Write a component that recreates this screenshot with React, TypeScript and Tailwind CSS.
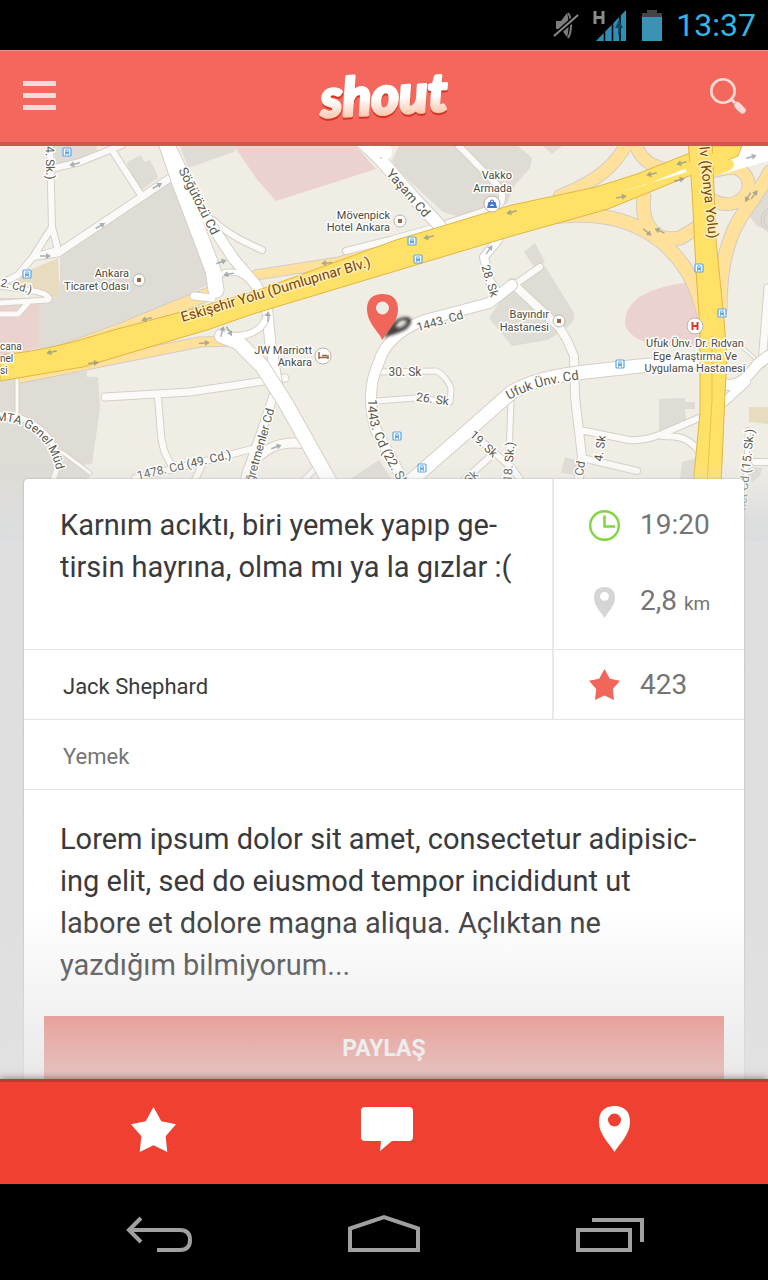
import React from "react";

const LOCAL = "#fbfaf8";
const CASING = "#d5d0c6";

const buildings = [
  "M60 257L170 178L180 200L211 283L120 330L77 345L39 360V297L60 298Z",
  "M0 378L87 371V377L98 377L100 408L92 464L83 465L90 477L60 492L0 540Z",
  "M39 345L39 330L110 325L60 350Z",
  "M52 146H96L100 158L58 168Z",
  "M127 162L141 155L144 162L150 160L156 172L158 178L138 192L132 180Z",
  "M180 146H238L234 152L188 168Z",
  "M399 146H518L532 158L530 168L515 185L507 203L460 217L443 212L398 170L392 160Z",
  "M543 146L552 154L562 146Z",
  "M503 297L545 266L574 313C576 325 560 332 548 340L512 346L489 318Z",
  "M524 252L535 243L545 262L535 268Z",
  "M659 399L685 398V402H695V409H685L687 427L659 432Z",
  "M565 457L579 461L577 475L561 473Z",
  "M682 462L697 458L694 480H680Z",
  "M768 188L755 208L750 217L757 226L768 230Z",
  "M349 480L379 460L392 480Z",
  "M745 466L762 468L760 476L752 482L744 480Z",
];

const pinkAreas = [
  "M234 146H356L376 169L276 201L256 178Z",
  "M0 298H39V348L0 358Z",
  "M685 283C650 287 625 300 625 322C625 335 645 346 670 346H710V300L699 283Z",
];

const tanAreas = ["M30 270L58 258L60 298L20 292L14 284Z", "M749 407H768V424L749 422Z"];

/* [path, width] */
const localRoads: [string, number][] = [
  ["M50 146L52 227L33 257L18 275L0 284", 6],
  ["M52 227L58 250L33 257", 6],
  ["M36 256L58 253L170 178", 7],
  ["M55 168L80 162L122 145", 6],
  ["M112 150L141 195", 6],
  ["M0 286L33 291C46 293 52 298 48 300L0 303", 5],
  ["M0 314H18L28 303", 5],
  ["M213 220C225 232 240 240 262 250", 6],
  ["M346 251L390 240L436 227L496 207C504 202 504 195 498 186L459 146", 6],
  ["M105 397L190 392L285 378", 7],
  ["M158 397L161 435C163 450 166 458 174 468", 6],
  ["M135 478L190 465L252 449", 6],
  ["M203 463L193 484", 6],
  ["M17 380V415", 3],
  ["M0 415C35 415 58 440 58 465L52 484", 5],
  ["M62 452L90 473", 3],
  ["M276 388L262 430L243 484", 8],
  ["M248 470C262 448 280 440 306 444", 9],
  ["M318 466L300 484", 5],
  ["M379 372L436 371C443 373 451 385 451 390L450 402L416 398L376 401", 5],
  ["M469 430L512 468L522 482", 6],
  ["M491 456L460 484", 6],
  ["M511 400L508 484", 5],
  ["M512 283L559 327L567 340L574 356L575 397L582 457L578 484", 8],
  ["M498 296L540 267", 6],
  ["M580 430L629 440C640 441 652 438 662 434L699 418", 6],
  ["M662 436C680 436 688 438 698 450", 6],
  ["M582 458L637 471", 6],
  ["M742 347L757 360", 2],
  ["M768 288L762 364", 7],
  ["M755 462H768", 6],
  ["M748 430L744 520", 4],
];

const mainRoads: [string, number][] = [
  ["M166 142L180 183L213 270L216 290", 15],
  ["M172 150L198 205L233 258L256 285L267 308L270 340L277 384", 10],
  ["M212 286C214 275 224 270 238 273C250 278 254 284 256 290", 5],
  ["M194 296L212 298", 7],
  ["M222 336L238 342L262 366L285 402L332 486", 14],
  ["M232 336C250 336 262 330 266 318", 6],
  ["M360 140L381 160L412 196L440 226", 12],
  ["M498 240L484 257L489 280L500 296", 8],
  ["M512 285L489 303L425 320C395 330 382 350 379 362C368 385 370 410 376 430L406 486", 10],
  ["M405 486L512 392C545 373 590 372 640 366L702 361", 13],
  ["M724 384C740 390 752 370 758 364L768 356", 10],
  ["M724 402L746 382", 8],
];

const ramps: [string, number][] = [
  ["M60 352L120 330L213 292", 12],
  ["M256 275L339 262L400 243", 9],
  ["M20 378L100 362L200 342L234 341", 9],
  ["M628 142C615 165 600 180 560 196", 12],
  ["M634 142C640 158 650 168 672 170", 12],
  ["M644 196C640 225 655 243 680 238L700 226", 13],
  ["M550 217C610 210 640 225 662 242C685 262 702 290 706 330", 13],
  ["M712 200C735 212 752 195 748 180C742 165 730 166 710 172", 12],
  ["M770 172C755 200 738 215 730 240C724 256 720 280 720 310", 13],
];

const HIGHWAY =
  "M0 355C50 350 80 340 110 331L207 305L256 291L396 240L446 225L512 205L596 187L637 174L690 153L700 146H742L738 156L608 209L512 236L256 313L207 330L133 352L83 367L0 381Z";
const KONYA = "M688 140L692 190L696 270L700 330V413L693 486H721L725 393L727 360L724 320L716 240L712 140Z";

const arrows: [number, number, number][] = [
  [75, 164, 165], [157, 186, -30], [100, 226, -30], [45, 256, 0], [221, 262, -20], [229, 274, 170],
  [147, 319, 165], [52, 352, 165], [93, 363, -5], [204, 343, -5], [222, 332, -75], [229, 331, 60],
  [268, 317, -90], [327, 263, 175], [429, 237, 165], [512, 212, 165], [489, 250, -55], [652, 174, 165],
  [682, 163, 165], [679, 180, -15], [621, 197, -10], [647, 232, 40], [660, 231, 205], [751, 157, -15],
  [748, 197, 120], [754, 195, -55], [276, 447, -20],
];

const buses: [number, number][] = [
  [67, 152], [27, 274], [412, 241], [418, 259], [397, 436], [422, 468], [699, 268], [722, 313], [620, 364],
];

function Label({
  x, y, r = 0, size = 12, anchor = "middle", fill = "#4d4a40", halo = "#ffffff", children,
}: {
  x: number; y: number; r?: number; size?: number; anchor?: "start" | "middle" | "end";
  fill?: string; halo?: string; children: React.ReactNode;
}) {
  return (
    <text
      transform={`translate(${x} ${y}) rotate(${r})`}
      fontSize={size}
      textAnchor={anchor}
      fill={fill}
      stroke={halo}
      strokeWidth="3"
      strokeLinejoin="round"
      paintOrder="stroke"
    >
      {children}
    </text>
  );
}

function PathLabel({ id, d, size = 12, children }: { id: string; d: string; size?: number; children: string }) {
  return (
    <>
      <path id={id} d={d} fill="none" />
      <text fontSize={size} fill="#5c584b" stroke="#ffffff" strokeWidth="3" strokeLinejoin="round" paintOrder="stroke">
        <textPath href={`#${id}`}>{children}</textPath>
      </text>
    </>
  );
}

function Roads({ roads, color, casing }: { roads: [string, number][]; color: string; casing: string }) {
  return (
    <g fill="none" strokeLinecap="round" strokeLinejoin="round">
      {roads.map(([d, w]) => (
        <path key={`c${d}`} d={d} stroke={casing} strokeWidth={w + 2} />
      ))}
      {roads.map(([d, w]) => (
        <path key={d} d={d} stroke={color} strokeWidth={w} />
      ))}
    </g>
  );
}

function CityMap() {
  return (
    <svg
      viewBox="0 146 768 396"
      preserveAspectRatio="xMidYMin slice"
      className="block h-[396px] w-full bg-[#f0ede5]"
      fontFamily="Roboto, sans-serif"
      role="img"
      aria-label="Ankara"
    >
      <defs>
        <linearGradient id="mapFade" x1="0" y1="0" x2="0" y2="1">
          <stop offset="0" stopColor="#dcddde" stopOpacity="0" />
          <stop offset="0.75" stopColor="#dcddde" stopOpacity="0.95" />
          <stop offset="1" stopColor="#dcddde" />
        </linearGradient>
        <filter id="pinShadow" x="-30%" y="-30%" width="160%" height="160%">
          <feGaussianBlur stdDeviation="1.6" />
        </filter>
      </defs>
      <rect x="0" y="146" width="768" height="396" fill="#f0ede5" />
      {pinkAreas.map((d) => <path key={d} d={d} fill="#ebd2cf" />)}
      {tanAreas.map((d) => <path key={d} d={d} fill="#e8dcc0" />)}
      {buildings.map((d) => <path key={d} d={d} fill="#dfdbd5" />)}
      <g fill="none" stroke="#cfcac4" strokeWidth="1">
        <circle cx="774" cy="220" r="13" />
        <circle cx="774" cy="220" r="10" />
      </g>
      <Roads roads={ramps} color="#ffe19c" casing="#d2cdc4" />
      <Roads roads={localRoads} color={LOCAL} casing={CASING} />
      <Roads roads={mainRoads.slice(0, 4)} color="#ffffff" casing={CASING} />
      <Roads roads={mainRoads.slice(4)} color="#ffffff" casing={CASING} />
      <circle cx="383" cy="152" r="9" fill="#ffffff" />
      <circle cx="381" cy="158" r="1" fill="#d5d0c6" />
      <path d="M700 170L742 146H768V161L722 174Z" fill="#ffffff" />
      <path d={HIGHWAY} fill="#ffe168" stroke="#e2b640" strokeWidth="1" />
      <path d="M604 197L645 185L692 166L694 170L650 183Z" fill="#ffffff" />
      <path d="M692 171L725 160C735 157 738 168 728 171L700 181Z" fill="#ffe168" />
      <path d={KONYA} fill="#ffe168" stroke="#e2b640" strokeWidth="1" />
      <path d="M712 335V400L707 484" fill="none" stroke="#ecc14e" strokeWidth="1" />
      <path d="M684 164L716 152L718 164L688 176Z" fill="#ffe168" />

      {arrows.map(([x, y, r]) => (
        <g key={`${x}-${y}`} transform={`translate(${x} ${y}) rotate(${r})`} opacity="0.65">
          <path d="M-5 0H2" stroke="#7d8a90" strokeWidth="1.5" />
          <path d="M1 -3L6 0L1 3Z" fill="#7d8a90" />
        </g>
      ))}
      {buses.map(([x, y]) => (
        <g key={`${x}-${y}`} transform={`translate(${x} ${y})`}>
          <rect x="-4" y="-4" width="8" height="8" rx="1" fill="#ffffff" stroke="#5aa5e8" strokeWidth="1.2" />
          <rect x="-2" y="-2.500" width="4" height="4.500" rx="1" fill="#5aa5e8" />
          <path d="M-1.500 -1H1.500" stroke="#ffffff" />
          <path d="M-2 2.700H-1M1 2.700H2" stroke="#5aa5e8" />
        </g>
      ))}

      <Label x={46} y={163} r={88} fill="#5c584b">4. Sk.)</Label>
      <Label x={0} y={286} r={14} size={11} anchor="start" fill="#5c584b">2. Cd.)</Label>
      <Label x={195} y={203} r={63} size={13} fill="#5c584b">Söğütözü Cd</Label>
      <Label x={405} y={196} r={49} size={13} fill="#5c584b">Yaşam Cd</Label>
      <Label x={277} y={294} r={-16.500} size={14} fill="#7a4408" halo="#fff0b8">Eskişehir Yolu (Dumlupınar Blv.)</Label>
      <Label x={704} y={193} r={84} size={14} fill="#7a4408" halo="#fff0b8">lv (Konya Yolu)</Label>
      <Label x={486} y={282} r={73} fill="#5c584b">28. Sk</Label>
      <Label x={441} y={325} r={-16} fill="#5c584b">1443. Cd</Label>
      <Label x={405} y={376} fill="#5c584b">30. Sk</Label>
      <Label x={432} y={403} r={8} fill="#5c584b">26. Sk</Label>
      <Label x={481} y={447} r={43} fill="#5c584b">19. Sk</Label>
      <Label x={513} y={462} r={-86} fill="#5c584b">18. Sk.)</Label>
      <Label x={474} y={480} r={-42} fill="#5c584b">Sk</Label>
      <Label x={604} y={449} r={-82} fill="#5c584b">4. Sk</Label>
      <Label x={584} y={469} r={-80} fill="#5c584b">Cd</Label>
      <Label x={185} y={469} r={-13} fill="#5c584b">1478. Cd (49. Cd.)</Label>
      <Label x={264} y={446} r={-74} fill="#5c584b">ğretmenler Cd</Label>
      <Label x={750} y={470} r={-84} fill="#5c584b">net Cd (15. Sk.)</Label>
      <PathLabel id="roadMta" d="M-4 421C24 420 48 436 56 468L58 480">MTA Genel Müd</PathLabel>
      <PathLabel id="road1443" d="M368 399C366 430 382 452 408 500" size={13}>1443. Cd (22. Sk.)</PathLabel>
      <PathLabel id="roadUfuk" d="M509 400C530 388 550 383 590 378" size={13}>Ufuk Ünv. Cd</PathLabel>

      <g>
        <Label x={129} y={277} size={11} anchor="end">Ankara</Label>
        <Label x={129} y={290} size={11} anchor="end">Ticaret Odası</Label>
        <Label x={390} y={219} size={11} anchor="end">Mövenpick</Label>
        <Label x={390} y={231} size={11} anchor="end">Hotel Ankara</Label>
        <Label x={512} y={179} size={11} anchor="end">Vakko</Label>
        <Label x={512} y={192} size={11} anchor="end">Armada</Label>
        <Label x={312} y={354} size={11} anchor="end">JW Marriott</Label>
        <Label x={312} y={366} size={11} anchor="end">Ankara</Label>
        <Label x={549} y={318} size={11} anchor="end">Bayındır</Label>
        <Label x={549} y={331} size={11} anchor="end">Hastanesi</Label>
        <Label x={695} y={347} size={11}>Ufuk Ünv. Dr. Rıdvan</Label>
        <Label x={695} y={360} size={11}>Ege Araştırma Ve</Label>
        <Label x={695} y={372} size={11}>Uygulama Hastanesi</Label>
        <Label x={0} y={350} size={10} anchor="start">cana</Label>
        <Label x={0} y={362} size={10} anchor="start">nel</Label>
        <Label x={0} y={374} size={10} anchor="start">si</Label>
      </g>
      <g fill="#ffffff" stroke="#b9b4ac">
        <circle cx="139" cy="280" r="6" />
        <circle cx="400" cy="221" r="6" />
        <circle cx="559" cy="321" r="6" />
        <circle cx="492" cy="204" r="8" />
        <circle cx="323" cy="356" r="8" />
        <circle cx="695" cy="326" r="8" />
      </g>
      <path d="M137 278h4v4h-4zM398 219h4v4h-4zM557 319h4v4h-4z" fill="#936846" />
      <path d="M488.500 202h7l1.500 6h-10z" fill="#3f78cc" />
      <path d="M490.500 202v-.5a1.500 1.500 0 0 1 3 0V202" fill="none" stroke="#3f78cc" strokeWidth="1.200" />
      <path d="M490.500 204.500h3v1.500h-3z" fill="#ffffff" />
      <path d="M319 352v7M319 357.500h9M328 355v4M322 355.500h5" fill="none" stroke="#936846" strokeWidth="1.500" />
      <path d="M692.500 322v8M697.500 322v8M692.500 326h5" fill="none" stroke="#d8382e" strokeWidth="2" />

      <g filter="url(#pinShadow)" opacity="0.8">
        <path d="M384 338C390 322 398 316 408 317C414 319 411 326 405 330C398 334 390 335 384 338ZM396 327C400 329 406 325 407 321C402 319 397 322 396 327Z" fill="#1c1917" fillRule="evenodd" />
      </g>
      <path
        d="M382.500 340C379 332 367 323 367 309C367 299 373 294 382.500 294S398 299 398 309C398 323 386 332 382.500 340ZM382.500 301.500a6.500 6.500 0 1 0 0 13a6.500 6.500 0 1 0 0-13Z"
        fill="#f1665b"
        fillRule="evenodd"
      />
      <rect x="0" y="462" width="768" height="80" fill="url(#mapFade)" />
    </svg>
  );
}

function StarIcon({ className }: { className: string }) {
  return (
    <svg viewBox="0 0 45 45" className={className} aria-hidden="true">
      <path d="M22.500 0L30.300 14.300L45 17.200L34.600 29.200L36.300 45L22.500 38.300L8.700 45L10.400 29.200L0 17.200L14.700 14.300Z" fill="currentColor" />
    </svg>
  );
}

function PinIcon({ className }: { className: string }) {
  return (
    <svg viewBox="0 0 31 46" className={className} aria-hidden="true">
      <path
        d="M15.500 46C11 38 0 29 0 16C0 5 6 0 15.500 0S31 5 31 16C31 29 20 38 15.500 46ZM15.500 7.500a6.500 6.500 0 1 0 0 13a6.500 6.500 0 1 0 0-13Z"
        fill="currentColor"
        fillRule="evenodd"
      />
    </svg>
  );
}

function StatusBar() {
  return (
    <div className="flex h-[50px] shrink-0 items-center justify-end bg-black pr-3">
      <svg viewBox="0 0 26 30" className="mr-[14px] h-[30px] w-[26px]" aria-hidden="true">
        <path d="M3 11H8L14 3C16 8 16 22 14 27L8 19H3Z" fill="#7d7d7d" />
        <path d="M15 3C19 8 19 22 15 28" fill="none" stroke="#7d7d7d" strokeWidth="2" />
        <path d="M0 27L24 6" stroke="#000000" strokeWidth="5" />
        <path d="M1 26L25 5" stroke="#8a8a8a" strokeWidth="2" />
      </svg>
      <svg viewBox="0 0 34 32" className="mr-[15px] h-8 w-[34px]" aria-hidden="true">
        <path d="M2 2V15M10 2V15M2 8.500H10" stroke="#8a8a8a" strokeWidth="3" fill="none" />
        <path d="M3 32L33 1V32Z" fill="#2d8fb8" />
        <path d="M11.500 18V32M19.500 12V32M27 5V32" stroke="#000000" strokeWidth="1.500" />
        <path d="M26 11L30 19H22Z" fill="#124860" />
        <path d="M26 18V26" stroke="#124860" strokeWidth="1.500" />
      </svg>
      <svg viewBox="0 0 20 32" className="mr-[14px] h-8 w-5" aria-hidden="true">
        <path d="M0 4H5V1H15V4H20V8H0Z" fill="#444444" />
        <path d="M0 8H20V32H0Z" fill="#3a93b5" />
      </svg>
      <span className="text-[32px] leading-8 text-[#33b5e5]">13:37</span>
    </div>
  );
}

function Logo() {
  return (
    <svg viewBox="0 0 140 60" className="h-[60px] w-[140px]" role="img" aria-label="shout">
      <defs>
        <linearGradient id="logoFill" gradientUnits="userSpaceOnUse" x1="0" y1="18" x2="0" y2="52">
          <stop offset="0.4" stopColor="#ffffff" />
          <stop offset="1" stopColor="#fbc0a4" />
        </linearGradient>
      </defs>
      <g
        transform="rotate(-3 70 30)"
        fontFamily="Lato, sans-serif"
        fontSize="53"
        fontWeight="900"
        fontStyle="italic"
        textAnchor="middle"
        strokeWidth="3"
        strokeLinejoin="round"
      >
        <text x="69" y="50" fill="#d9301c" stroke="#d9301c" aria-hidden="true">shout</text>
        <text x="69" y="48" fill="url(#logoFill)" stroke="url(#logoFill)">shout</text>
      </g>
    </svg>
  );
}

function Header() {
  return (
    <header className="flex h-24 shrink-0 items-center justify-between border-t border-b-4 border-t-[#f58d84] border-b-[#cf574e] bg-[#f3675c] pr-[22px] pb-0.5 pl-[23px]">
      <button type="button" aria-label="Menü" className="flex w-9 flex-col gap-[7px] pr-[3px]">
        <span className="h-[5px] w-full bg-[#fcdad7]" />
        <span className="h-[5px] w-full bg-[#fcdad7]" />
        <span className="h-[5px] w-full bg-[#fcdad7]" />
      </button>
      <Logo />
      <button type="button" aria-label="Ara">
        <svg viewBox="0 0 36 36" className="size-9" aria-hidden="true">
          <circle cx="13" cy="13" r="11.700" fill="none" stroke="#fcdad7" strokeWidth="2.600" />
          <path d="M21 21L25 25" stroke="#fcdad7" strokeWidth="3" />
          <path d="M24 26.500L27 23.500Q29 23.500 31 26L36 31.500Q36 35 32 36L27 32Q24 29 24 26.500Z" fill="#fcdad7" />
        </svg>
      </button>
    </header>
  );
}

function Stat({ icon, children }: { icon: React.ReactNode; children: React.ReactNode }) {
  return (
    <div className="flex h-[42px] items-center gap-5">
      <span className="flex w-[31px] justify-center">{icon}</span>
      <span className="text-[28px] leading-[42px] whitespace-nowrap text-[#757575]">{children}</span>
    </div>
  );
}

function ShoutCard() {
  return (
    <article className="relative mx-6 -mt-[63px] rounded-t bg-white text-[#3a3a3c] shadow-[0_0_2px_rgba(0,0,0,0.3)]">
      <div className="grid grid-cols-[1fr_192px]">
        <h2 className="border-b border-[#e3e3e3] px-9 pt-[25px] text-[29px] leading-[42px]">
          Karnım acıktı, biri yemek yapıp ge-
          <br />
          tirsin hayrına, olma mı ya la gızlar :(
        </h2>
        <div className="flex flex-col gap-[35px] border-b border-l-2 border-b-[#e3e3e3] border-l-[#e8e8e8] pt-[25px] pb-[26px] pl-[35px]">
          <Stat
            icon={
              <svg viewBox="0 0 31 31" className="size-[31px]" aria-hidden="true">
                <circle cx="15.500" cy="15.500" r="14.300" fill="none" stroke="#80d640" strokeWidth="2.400" />
                <path d="M15.500 5.500V16.500H26" fill="none" stroke="#80d640" strokeWidth="2.600" />
              </svg>
            }
          >
            19:20
          </Stat>
          <Stat icon={<PinIcon className="h-[31px] w-[21px] text-[#d5d5d5]" />}>
            2,8 <span className="text-[19px]">km</span>
          </Stat>
        </div>
        <div className="flex h-[70px] items-center border-b border-[#e3e3e3] pt-1 pl-[39px] text-[22px]">Jack Shephard</div>
        <div className="flex items-center border-b border-l-2 border-b-[#e3e3e3] border-l-[#e8e8e8] pl-[35px]">
          <Stat icon={<StarIcon className="size-[31px] text-[#f1665b]" />}>423</Stat>
        </div>
      </div>
      <div className="flex h-[70px] items-center border-b border-[#e3e3e3] pt-1 pl-[39px] text-[22px] text-[#757575]">Yemek</div>
      <p className="px-9 pt-7 text-[29px] leading-[42px]">
        Lorem ipsum dolor sit amet, consectetur adipisic-
        <br />
        ing elit, sed do eiusmod tempor incididunt ut
        <br />
        labore et dolore magna aliqua. Açlıktan ne
        <br />
        yazdığım bilmiyorum...
      </p>
      <div className="px-5 pt-[30px]">
        <button type="button" className="h-[66px] w-full bg-[#ef655a] text-[23px] font-bold text-white">
          PAYLAŞ
        </button>
      </div>
    </article>
  );
}

function ActionBar() {
  return (
    <nav className="relative flex h-[105px] shrink-0 items-start justify-between border-t-[3px] border-[#bf3a2f] bg-[#f04032] pt-6 pr-[18%] pl-[17%] text-white shadow-[0_0_8px_rgba(0,0,0,0.5)]">
      <button type="button" aria-label="Favoriler" className="pt-px">
        <StarIcon className="size-[45px]" />
      </button>
      <button type="button" aria-label="Yorumlar" className="pt-px">
        <svg viewBox="0 0 52 44" className="h-11 w-[52px]" aria-hidden="true">
          <path d="M4 0H48Q52 0 52 4V30Q52 34 48 34H31L19 44L20 34H4Q0 34 0 30V4Q0 0 4 0Z" fill="currentColor" />
        </svg>
      </button>
      <button type="button" aria-label="Konum">
        <PinIcon className="h-[46px] w-[31px]" />
      </button>
    </nav>
  );
}

function SystemBar() {
  return (
    <nav className="relative flex h-24 shrink-0 items-center justify-center gap-[153px] bg-black pt-1 text-[#a0a0a0]">
      <button type="button" aria-label="Geri">
        <svg viewBox="0 0 72 40" className="h-10 w-[72px]" fill="none" stroke="currentColor" strokeWidth="4" aria-hidden="true">
          <path d="M34 36H57Q67 36 67 26T57 16H7" />
          <path d="M18 4L6 16L18 28" />
        </svg>
      </button>
      <button type="button" aria-label="Ana ekran">
        <svg viewBox="0 0 72 40" className="h-10 w-[72px]" fill="none" stroke="currentColor" strokeWidth="4" aria-hidden="true">
          <path d="M2 36V14.500L36 3L70 14.500V36Z" />
        </svg>
      </button>
      <button type="button" aria-label="Son uygulamalar">
        <svg viewBox="0 0 72 40" className="h-10 w-[72px]" fill="none" stroke="currentColor" strokeWidth="4" aria-hidden="true">
          <path d="M5 16H57V36H5Z" />
          <path d="M19 6H69V28" />
        </svg>
      </button>
    </nav>
  );
}

export default function App() {
  return (
    <div className="flex h-dvh flex-col overflow-hidden bg-[#e1e1e1] font-[Roboto,sans-serif]">
      <StatusBar />
      <Header />
      <div className="relative flex min-h-0 flex-1 flex-col">
        <svg className="absolute inset-0 size-full opacity-10" aria-hidden="true">
          <filter id="grain">
            <feTurbulence type="fractalNoise" baseFrequency="0.8" numOctaves="2" />
            <feColorMatrix type="saturate" values="0" />
          </filter>
          <rect width="100%" height="100%" filter="url(#grain)" />
        </svg>
        <main className="relative min-h-0 flex-1 overflow-y-auto [scrollbar-width:none]">
          <CityMap />
          <ShoutCard />
        </main>
        <div className="pointer-events-none absolute inset-x-0 bottom-0 h-[172px] bg-linear-to-b from-[#e2e2e2]/0 to-[#e2e2e2]/76" />
      </div>
      <ActionBar />
      <SystemBar />
    </div>
  );
}
